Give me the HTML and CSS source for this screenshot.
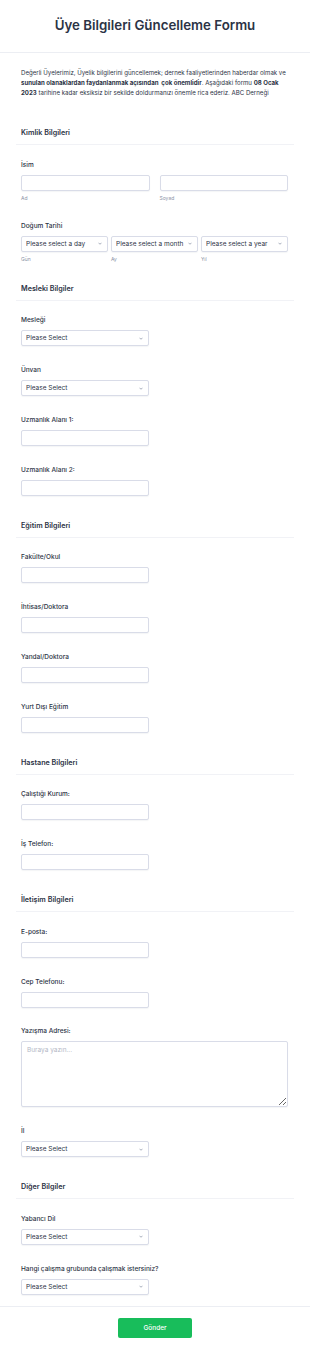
FILE: index.html
```html
<!DOCTYPE html>
<html lang="tr">
<head>
  <meta charset="UTF-8">
  <title>Üye Bilgileri Güncelleme Formu</title>
  <meta name="viewport" content="width=device-width, initial-scale=1.0">
  <link rel="stylesheet" href="styles.css">
</head>
<body>

  <header class="form-header">
    <h1>Üye Bilgileri Güncelleme Formu</h1>
  </header>

  <main class="form-body">
    <p class="intro">
      Değerli Üyelerimiz, Üyelik bilgilerini güncellemek; dernek faaliyetlerinden haberdar olmak ve
      <b>sunulan olanaklardan faydanlanmak açısından&nbsp; çok önemlidir</b>. Aşağıdaki formu <b>08 Ocak</b>
      <b>2023</b> tarihine kadar eksiksiz bir sekilde doldurmanızı önemle rica ederiz. ABC Derneği
    </p>

    <section class="form-section">
      <h2 class="section-title">Kimlik Bilgileri</h2>

      <div class="field">
        <label class="field-label">İsim</label>
        <div class="row row-2">
          <div>
            <input class="text-input full" type="text">
            <span class="sublabel">Ad</span>
          </div>
          <div>
            <input class="text-input full" type="text">
            <span class="sublabel">Soyad</span>
          </div>
        </div>
      </div>

      <div class="field field-last">
        <label class="field-label">Doğum Tarihi</label>
        <div class="row row-3">
          <div>
            <div class="select-wrap full">
              <select class="select-input"><option>Please select a day</option></select>
              <svg class="chevron" viewBox="0 0 8 5"><path d="M1 1l3 3 3-3"/></svg>
            </div>
            <span class="sublabel">Gün</span>
          </div>
          <div>
            <div class="select-wrap full">
              <select class="select-input"><option>Please select a month</option></select>
              <svg class="chevron" viewBox="0 0 8 5"><path d="M1 1l3 3 3-3"/></svg>
            </div>
            <span class="sublabel">Ay</span>
          </div>
          <div>
            <div class="select-wrap full">
              <select class="select-input"><option>Please select a year</option></select>
              <svg class="chevron" viewBox="0 0 8 5"><path d="M1 1l3 3 3-3"/></svg>
            </div>
            <span class="sublabel">Yıl</span>
          </div>
        </div>
      </div>
    </section>

    <section class="form-section">
      <h2 class="section-title">Mesleki Bilgiler</h2>

      <div class="field">
        <label class="field-label">Mesleği</label>
        <div class="select-wrap">
          <select class="select-input"><option>Please Select</option></select>
          <svg class="chevron" viewBox="0 0 8 5"><path d="M1 1l3 3 3-3"/></svg>
        </div>
      </div>

      <div class="field">
        <label class="field-label">Ünvan</label>
        <div class="select-wrap">
          <select class="select-input"><option>Please Select</option></select>
          <svg class="chevron" viewBox="0 0 8 5"><path d="M1 1l3 3 3-3"/></svg>
        </div>
      </div>

      <div class="field">
        <label class="field-label">Uzmanlık Alanı 1:</label>
        <input class="text-input" type="text">
      </div>

      <div class="field">
        <label class="field-label">Uzmanlık Alanı 2:</label>
        <input class="text-input" type="text">
      </div>
    </section>

    <section class="form-section">
      <h2 class="section-title">Eğitim Bilgileri</h2>

      <div class="field">
        <label class="field-label">Fakülte/Okul</label>
        <input class="text-input" type="text">
      </div>

      <div class="field">
        <label class="field-label">İhtisas/Doktora</label>
        <input class="text-input" type="text">
      </div>

      <div class="field">
        <label class="field-label">Yandal/Doktora</label>
        <input class="text-input" type="text">
      </div>

      <div class="field">
        <label class="field-label">Yurt Dışı Eğitim</label>
        <input class="text-input" type="text">
      </div>
    </section>

    <section class="form-section">
      <h2 class="section-title">Hastane Bilgileri</h2>

      <div class="field">
        <label class="field-label">Çalıştığı Kurum:</label>
        <input class="text-input" type="text">
      </div>

      <div class="field">
        <label class="field-label">İş Telefon:</label>
        <input class="text-input" type="text">
      </div>
    </section>

    <section class="form-section">
      <h2 class="section-title">İletişim Bilgileri</h2>

      <div class="field">
        <label class="field-label">E-posta:</label>
        <input class="text-input" type="text">
      </div>

      <div class="field">
        <label class="field-label">Cep Telefonu:</label>
        <input class="text-input" type="text">
      </div>

      <div class="field">
        <label class="field-label">Yazışma Adresi:</label>
        <textarea class="text-area" placeholder="Buraya yazın..."></textarea>
      </div>

      <div class="field">
        <label class="field-label">İl</label>
        <div class="select-wrap">
          <select class="select-input"><option>Please Select</option></select>
          <svg class="chevron" viewBox="0 0 8 5"><path d="M1 1l3 3 3-3"/></svg>
        </div>
      </div>
    </section>

    <section class="form-section">
      <h2 class="section-title">Diğer Bilgiler</h2>

      <div class="field">
        <label class="field-label">Yabancı Dil</label>
        <div class="select-wrap">
          <select class="select-input"><option>Please Select</option></select>
          <svg class="chevron" viewBox="0 0 8 5"><path d="M1 1l3 3 3-3"/></svg>
        </div>
      </div>

      <div class="field">
        <label class="field-label">Hangi çalışma grubunda çalışmak istersiniz?</label>
        <div class="select-wrap">
          <select class="select-input"><option>Please Select</option></select>
          <svg class="chevron" viewBox="0 0 8 5"><path d="M1 1l3 3 3-3"/></svg>
        </div>
      </div>
    </section>
  </main>

  <footer class="form-footer">
    <button class="submit-btn" type="button">Gönder</button>
  </footer>

</body>
</html>
```

FILE: styles.css
```css
* { box-sizing: border-box; }
body { margin: 0; background: #fff; font-family: Inter, "Noto Sans", sans-serif; color: #2c3345; }

.form-header {
  height: 53px;
  padding-bottom: 2px;
  border-bottom: 1px solid #eceef3;
  display: flex;
  align-items: center;
  justify-content: center;
}
.form-header h1 {
  margin: 0;
  font-size: 13.3px;
  line-height: 16px;
  font-weight: 600;
}

.form-body { padding: 0 16px; }

.intro {
  margin: 15px 0 29px;
  padding: 0 2px 0 5px;
  font-size: 6.1px;
  line-height: 10px;
}
.intro b { font-weight: 700; }

.section-title {
  margin: 20px 0 0;
  padding: 0 5px 5px;
  font-size: 7.2px;
  line-height: 12px;
  font-weight: 600;
  border-bottom: 1px solid #f1f2f6;
}

.field { padding: 14.75px 5px 4px; }
.field-last { padding-bottom: 0; }

.field-label {
  display: block;
  margin-bottom: 5px;
  font-size: 6.5px;
  line-height: 10px;
  font-weight: 500;
}

.row { display: grid; width: 267px; }
.row-2 { grid-template-columns: repeat(2, minmax(0, 1fr)); gap: 10px; }
.row-3 { grid-template-columns: repeat(3, minmax(0, 1fr)); gap: 3px; }

.text-input,
.select-input,
.text-area {
  display: block;
  width: 128px;
  height: 16px;
  margin: 0;
  padding: 0 4px;
  border: 1px solid #d9dce8;
  border-radius: 2px;
  background: #fff;
  box-shadow: 0 1px 1px rgba(44, 51, 69, 0.05);
  font-family: inherit;
  font-size: 6.5px;
  color: #2c3345;
  outline: none;
}

.select-wrap { position: relative; width: 128px; }
.select-input {
  width: 100%;
  appearance: none;
  -webkit-appearance: none;
  padding-right: 12px;
}
.chevron {
  position: absolute;
  right: 6px;
  top: 6.5px;
  width: 4px;
  height: 3px;
  fill: none;
  stroke: #6f7a92;
  stroke-width: 1.2;
}

.full,
.select-wrap.full { width: 100%; }

.sublabel {
  display: block;
  margin-top: 3px;
  font-size: 5px;
  line-height: 8px;
  color: #8a92a6;
}

.text-area {
  width: 267px;
  height: 66px;
  padding: 4px 5px;
  resize: vertical;
}
.text-area::placeholder { color: #b3b8c6; }

.form-footer {
  margin-top: 7px;
  border-top: 1px solid #eceef3;
  padding: 11px 0 17px;
  display: flex;
  justify-content: center;
}
.submit-btn {
  width: 74px;
  height: 20px;
  border: none;
  border-radius: 2px;
  background: #18bd5b;
  color: #fff;
  font-family: inherit;
  font-size: 6.5px;
  font-weight: 500;
}
```
